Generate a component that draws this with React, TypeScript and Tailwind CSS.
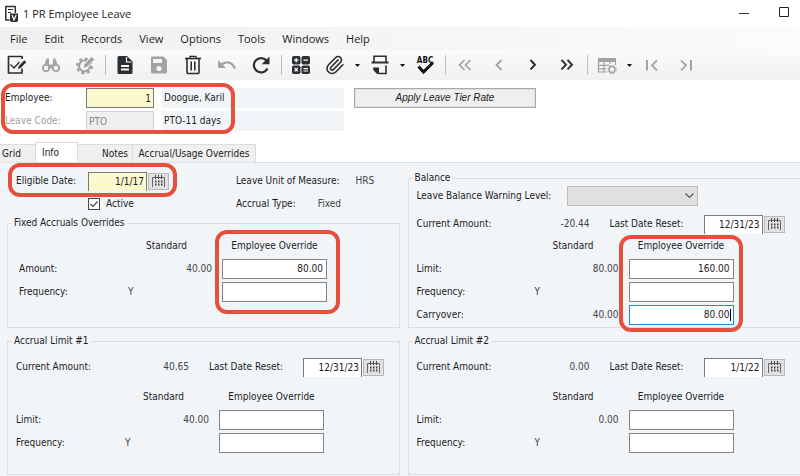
import type { ReactNode } from 'react';

const DARK = '#2b2f33';
const MUTED = '#a3a3a3';

function Ico({ children, w = 20 }: { children: ReactNode; w?: number }) {
  return (
    <svg width={w} height="20" viewBox={`0 0 ${w} 20`} fill="none" aria-hidden="true" className="shrink-0">
      {children}
    </svg>
  );
}

function Tool({ label, children, disabled }: { label: string; children: ReactNode; disabled?: boolean }) {
  return (
    <button type="button" aria-label={label} disabled={disabled} className="flex h-[30px] w-[34px] shrink-0 items-center justify-center">
      <Ico>{children}</Ico>
    </button>
  );
}

function Caret({ label }: { label: string }) {
  return (
    <button type="button" aria-label={label} className="flex h-[30px] w-[11px] shrink-0 items-center justify-center">
      <svg width="5" height="3" viewBox="0 0 5 3" aria-hidden="true">
        <path d="M0 0h5L2.500 3z" fill="#111" />
      </svg>
    </button>
  );
}

function Separator() {
  return (
    <div className="flex w-[6px] shrink-0 justify-center">
      <div className="h-5 w-px bg-[#bdbdbd]" />
    </div>
  );
}

function Toolbar() {
  return (
    <div role="toolbar" className="flex h-[30px] items-center overflow-hidden bg-linear-to-b from-[#fbfbfb] to-[#f0f0f0]">
      <Tool label="Edit">
        <path d="M15 13.500v4.500H1.500V1.500H15v2.500" stroke={DARK} strokeWidth="1.700" strokeLinejoin="round" />
        <path d="M3.500 9.500l3.500 3.500L12.500 7" stroke={DARK} strokeWidth="1.400" />
        <path d="M11 14l.8-3L17.300 5.300l2 2-5.600 5.800z" fill={DARK} />
      </Tool>
      <Tool label="Find" disabled>
        <path d="M5 5h3v4.500h4V5h3l1.800 6H3.200z" fill={MUTED} />
        <circle cx="5" cy="13" r="3.200" stroke={MUTED} strokeWidth="1.800" fill="#f4f4f4" />
        <circle cx="15" cy="13" r="3.200" stroke={MUTED} strokeWidth="1.800" fill="#f4f4f4" />
        <path d="M8.500 10.500h3v3h-3zM5.500 3.500h2.500V5H5.500zM12 3.500h2.500V5H12z" fill={MUTED} />
      </Tool>
      <Tool label="Options" disabled>
        <circle cx="9.500" cy="11" r="7.200" stroke={MUTED} strokeWidth="2.600" strokeDasharray="3.100 2.555" />
        <circle cx="9.500" cy="11" r="5.400" stroke={MUTED} strokeWidth="2" />
        <path d="M8 13.500l.8-4L16.500 1.500 19.800 4.500 12 12.300z" fill={MUTED} stroke="#f6f6f6" strokeWidth="1" />
      </Tool>
      <Separator />
      <Tool label="New">
        <path d="M4.500 1H12l5.500 5.500v11a1.500 1.500 0 0 1-1.500 1.500H4a1.500 1.500 0 0 1-1.500-1.500v-15A1.500 1.500 0 0 1 4 1z" fill={DARK} />
        <path d="M11.500 2v5h5" stroke="#f6f6f6" strokeWidth="1.200" />
        <path d="M6 11h8M6 14.500h8" stroke="#f6f6f6" strokeWidth="1.800" />
      </Tool>
      <Tool label="Save" disabled>
        <path d="M3 1.500h11.500L18 5v12a1.500 1.500 0 0 1-1.500 1.500h-13A1.500 1.500 0 0 1 2 17V3a1.500 1.500 0 0 1 1-1.500z" fill={MUTED} />
        <path d="M4 4h9v4H4z" fill="#f6f6f6" />
        <circle cx="10" cy="13.500" r="2.600" fill="#f6f6f6" />
      </Tool>
      <Tool label="Delete">
        <path d="M2 3.500h16" stroke={DARK} strokeWidth="1.700" />
        <path d="M7 3V1.300h6V3" stroke={DARK} strokeWidth="1.300" />
        <path d="M4 4v13.500a1 1 0 0 0 1 1h10a1 1 0 0 0 1-1V4" stroke={DARK} strokeWidth="1.600" />
        <path d="M8.200 6.500v9M11.800 6.500v9" stroke={DARK} strokeWidth="1.600" />
      </Tool>
      <Tool label="Undo" disabled>
        <path d="M1 5v8h8L6 10c3.500-2.800 8.500-1.800 11 4l2-.8C16.300 6 9.500 4.400 4.200 8.200z" fill={MUTED} />
      </Tool>
      <Tool label="Refresh">
        <path d="M16.500 13.500A7.200 7.200 0 1 1 15.500 5.500" stroke={DARK} strokeWidth="2.200" />
        <path d="M18.500 1.500v7.800h-7.800z" fill={DARK} />
      </Tool>
      <Separator />
      <Tool label="Calculator">
        <rect x="1" y="1" width="8.500" height="8.500" rx="1.800" fill={DARK} />
        <rect x="10.500" y="1" width="8.500" height="8.500" rx="1.800" fill={DARK} />
        <rect x="1" y="10.500" width="8.500" height="8.500" rx="1.800" fill={DARK} />
        <rect x="10.500" y="10.500" width="8.500" height="8.500" rx="1.800" fill={DARK} />
        <path d="M3 5.200h4.500M5.200 3v4.500M12.500 5.200H17M3.600 13l3.200 3.400M6.800 13l-3.200 3.400M12.500 13.600H17M12.500 16H17" stroke="#fff" strokeWidth="1.200" />
      </Tool>
      <Tool label="Attachments">
        <path
          transform="translate(-.5 -.2) scale(.85)"
          d="m16 6-8.414 8.586a2 2 0 0 0 2.829 2.829l8.414-8.586a4 4 0 1 0-5.657-5.657l-8.379 8.551a6 6 0 1 0 8.485 8.485l8.379-8.551"
          stroke={DARK}
          strokeWidth="1.900"
          strokeLinecap="round"
        />
      </Tool>
      <Caret label="Attachment choices" />
      <Tool label="Print">
        <path d="M4 7V1.300h12V7" stroke={DARK} strokeWidth="1.600" />
        <path d="M1.500 7.500h17" stroke={DARK} strokeWidth="2" />
        <path d="M16 10.500v8H9" stroke={DARK} strokeWidth="1.600" />
        <path d="M3.200 12.500H9v6.500H7L3.200 15z" fill={DARK} />
      </Tool>
      <Caret label="Print choices" />
      <Tool label="Check spelling">
        <text x="10" y="8" textAnchor="middle" fontSize="8" fontWeight="700" fontFamily="DejaVu Sans Condensed, sans-serif" fill="#111">ABC</text>
        <path d="M3.500 11.500l5 5.500L18 7.500" stroke="#111" strokeWidth="3" />
      </Tool>
      <Separator />
      <Tool label="First record" disabled>
        <path d="M9.500 5l-5 5 5 5M15.500 5l-5 5 5 5" stroke={MUTED} strokeWidth="1.700" />
      </Tool>
      <Tool label="Previous record" disabled>
        <path d="M12.500 5l-5 5 5 5" stroke={MUTED} strokeWidth="1.900" />
      </Tool>
      <Tool label="Next record">
        <path d="M7.500 5l4.500 4.700-4.500 4.700" stroke={DARK} strokeWidth="2" />
      </Tool>
      <Tool label="Last record">
        <path d="M4.500 5l4.500 4.700-4.500 4.700M10.500 5l4.500 4.700-4.500 4.700" stroke={DARK} strokeWidth="1.900" />
      </Tool>
      <Separator />
      <Tool label="Grid settings" disabled>
        <path d="M1 3h18v4H1z" fill={MUTED} />
        <path d="M1.500 6v11H10M1.500 10.300H12M1.500 13.800H9M7 6v11M13 6v3M18.500 6v4" stroke={MUTED} strokeWidth="1.200" />
        <circle cx="15" cy="14.500" r="3" stroke={MUTED} strokeWidth="1.500" />
        <circle cx="15" cy="14.500" r="4.300" stroke={MUTED} strokeWidth="1" strokeDasharray="1.700 1.677" />
      </Tool>
      <Caret label="Grid choices" />
      <Tool label="Go to start" disabled>
        <path d="M5 5v10.500" stroke={MUTED} strokeWidth="2" />
        <path d="M15 5.300l-5 5 5 5" stroke={MUTED} strokeWidth="1.800" />
      </Tool>
      <Tool label="Go to end" disabled>
        <path d="M15 5v10.500" stroke={MUTED} strokeWidth="2" />
        <path d="M5 5.300l5 5-5 5" stroke={MUTED} strokeWidth="1.800" />
      </Tool>
    </div>
  );
}

function DateField({ id, value, yellow }: { id: string; value: string; yellow?: boolean }) {
  return (
    <div className="flex items-center gap-px">
      <input
        id={id}
        defaultValue={value}
        className={`h-[19px] w-[59px] border border-b-0 border-[#7a7a7a] px-[2px] text-right ${yellow ? 'bg-[#fcf8cd]' : 'bg-white'}`}
      />
      <button type="button" aria-label="Open calendar" className="flex h-[17px] w-[21px] items-center justify-center border border-[#b9b9b9] bg-[#e2e2e2]">
        <svg width="13" height="12" viewBox="0 0 13 12" fill="none" aria-hidden="true">
          <path d="M.5 12V2.500h12V12" stroke="#666" />
          <path d="M3.500 0v4M6.500 0v4M9.500 0v4" stroke="#444" />
          <path d="M3 6.500h1.500M6 6.500h1.500M9 6.500h1.500M3 9.500h1.500M6 9.500h1.500M9 9.500h1.500" stroke="#444" strokeWidth="2" />
        </svg>
      </button>
    </div>
  );
}

function Group({ title, children, className = '' }: { title: string; children: ReactNode; className?: string }) {
  return (
    <fieldset className={`min-w-0 border border-[#dcdfe1] ${className}`}>
      <legend className="ml-1 h-4 px-[2px] leading-4">{title}</legend>
      {children}
    </fieldset>
  );
}

function CurrentAmount({ id, amount, date }: { id: string; amount: string; date: string }) {
  return (
    <div className="flex h-5 items-center pl-2">
      <span>Current Amount:</span>
      <span className="w-[98px] text-right text-[#444]">{amount}</span>
      <label htmlFor={id} className="w-[114px] pl-[20px]">Last Date Reset:</label>
      <DateField id={id} value={date} />
    </div>
  );
}

type Row = { label: string; period?: string; standard?: string; value?: string; active?: boolean };

function Overrides({ id, rows, labelClass, padClass, marked }: { id: string; rows: Row[]; labelClass: string; padClass: string; marked?: string }) {
  return (
    <div className={`flex ${padClass}`}>
      <div>
        <div className="flex h-[22px] items-center">
          <span className={labelClass} />
          <span className="w-[84px] pl-[18px]">Standard</span>
        </div>
        {rows.map((r) => (
          <div key={r.label} className="flex h-[23px] items-center">
            <label htmlFor={`${id}-${r.label}`} className={labelClass}>{r.label}:</label>
            <span className="flex w-[84px] justify-between text-[#444]">
              <span>{r.period}</span>
              <span>{r.standard}</span>
            </span>
          </div>
        ))}
      </div>
      <div className="relative ml-[10px] w-[105px]">
        <div className="flex h-[22px] items-center justify-center whitespace-nowrap">Employee Override</div>
        {rows.map((r) => (
          <div key={r.label} className="relative flex h-[23px] items-center">
            <input
              id={`${id}-${r.label}`}
              defaultValue={r.value}
              className={`h-5 w-full border bg-white px-[3px] text-right ${r.active ? 'border-[#2f86d6]' : 'border-[#858585]'}`}
            />
            {r.active && <span className="absolute right-[3px] h-3 w-px bg-black" />}
          </div>
        ))}
        {marked && <div className={`pointer-events-none absolute rounded-xl border-4 border-[#e4503c] ${marked}`} />}
      </div>
    </div>
  );
}

const menus = ['File', 'Edit', 'Records', 'View', 'Options', 'Tools', 'Windows', 'Help'];

export default function App() {
  return (
    <div className="flex min-h-screen flex-col overflow-hidden bg-white font-['DejaVu_Sans_Condensed','DejaVu_Sans',sans-serif] text-[10px] leading-4 text-[#1c1c1c]">
      <header className="flex h-[27px] items-center gap-1 pl-1 font-['Open_Sans',sans-serif] text-[11px]">
        <svg width="15" height="18" viewBox="0 0 15 18" fill="none" aria-hidden="true">
          <path d="M5.500 15H1.800V1.500h9.500V8" stroke={DARK} strokeWidth="1.500" strokeLinejoin="round" />
          <path d="M4 4.500h5M4 7.500h3" stroke={DARK} strokeWidth="1.200" />
          <path d="M6 8.500h8v7.500l-1.500 1H7.500L6 16z" fill={DARK} />
          <path d="M8 10l2 5 2.200-5" stroke="#fff" strokeWidth="1.200" />
        </svg>
        <h1 className="flex-1">1 PR Employee Leave</h1>
        <button type="button" aria-label="Minimize" className="flex h-full w-10 items-center justify-center">
          <svg width="10" height="10" viewBox="0 0 10 10" aria-hidden="true"><path d="M0 4.500h10" stroke="#333" /></svg>
        </button>
        <button type="button" aria-label="Maximize" className="flex h-full w-8 items-center justify-center pb-1">
          <svg width="10" height="10" viewBox="0 0 10 10" fill="none" aria-hidden="true"><path d="M.5.5h9v9h-9z" stroke="#222" /></svg>
        </button>
      </header>

      <nav className="flex h-[23px] items-center gap-[17px] bg-linear-to-r from-[#f0f0f0] to-[#fbfbfb] pl-[10px] font-['Open_Sans',sans-serif] text-[11px]">
        {menus.map((m) => <button key={m} type="button">{m}</button>)}
      </nav>

      <Toolbar />

      <section className="relative flex items-start gap-[10px] pt-2 pl-[5px]">
        <div className="grid grid-cols-[73px_68px_182px] items-center gap-x-2 gap-y-[3px]">
          <label htmlFor="employee">Employee:</label>
          <input id="employee" defaultValue="1" className="h-5 border border-[#7a7a7a] bg-[#fcf8cd] px-[2px] text-right" />
          <output className="flex h-5 items-center bg-[#f1f5f8] px-[2px]">Doogue, Karil</output>
          <label htmlFor="leave-code" className="text-[#a0a0a0]">Leave Code:</label>
          <input id="leave-code" disabled defaultValue="PTO" className="h-5 border border-[#cfcfcf] bg-[#f0f0f0] px-[2px] text-[#858585]" />
          <output className="flex h-5 items-center bg-[#f1f5f8] px-[2px]">PTO-11 days</output>
        </div>
        <button type="button" className="h-5 w-[182px] border border-[#a9a9a9] bg-[#efefef] font-['Liberation_Sans',sans-serif] text-[10px] italic shadow-[inset_0_0_0_1px_#dedede]">
          Apply Leave Tier Rate
        </button>
        <div className="pointer-events-none absolute top-[3px] left-px h-[51px] w-[234px] rounded-xl border-4 border-[#e4503c]" />
      </section>

      <div role="tablist" className="mt-[11px] flex h-5 items-end">
        <button type="button" role="tab" className="h-[18px] w-[35px] border-t border-[#dcdcdc] bg-[#f0f0f0] pl-[2px] text-left">Grid</button>
        <button type="button" role="tab" aria-selected="true" className="h-5 w-[43px] border border-b-0 border-[#dcdcdc] bg-white pl-[6px] text-left">Info</button>
        <button type="button" role="tab" className="h-[18px] w-[55px] border-t border-r border-[#dcdcdc] bg-[#f0f0f0] pr-1 text-right">Notes</button>
        <button type="button" role="tab" className="h-[18px] w-[123px] border-t border-r border-[#dcdcdc] bg-[#f0f0f0] whitespace-nowrap">Accrual/Usage Overrides</button>
      </div>

      <main className="flex-1 border-t border-[#dfe2e4] bg-[#f1f5f8] pt-[7px]">
        <div className="grid grid-cols-2 gap-x-2 gap-y-[5px] pl-[7px]">
          <div className="flex flex-col">
            <div className="relative grid h-[45px] grid-cols-[72px_148px_auto] grid-rows-2 items-center pl-[9px]">
              <label htmlFor="eligible-date" className="whitespace-nowrap">Eligible Date:</label>
              <DateField id="eligible-date" value="1/1/17" yellow />
              <p className="flex gap-4"><span>Leave Unit of Measure:</span><span className="text-[#444]">HRS</span></p>
              <label className="col-start-2 flex items-center gap-[6px]">
                <span className="relative flex">
                  <input type="checkbox" defaultChecked className="size-3 appearance-none border border-[#444] bg-white" />
                  <svg className="pointer-events-none absolute inset-0" width="12" height="12" viewBox="0 0 12 12" fill="none" aria-hidden="true">
                    <path d="M2.500 6l2.500 2.500L9.500 3.500" stroke="#444" strokeWidth="1.200" />
                  </svg>
                </span>
                Active
              </label>
              <p className="flex gap-[22px]"><span>Accrual Type:</span><span className="text-[#444]">Fixed</span></p>
              <div className="pointer-events-none absolute top-[-7px] left-px h-[34px] w-[169px] rounded-xl border-4 border-[#e4503c]" />
            </div>
            <Group title="Fixed Accruals Overrides" className="flex-1">
              <Overrides
                id="fixed"
                labelClass="w-[109px]"
                padClass="pt-1 pl-[11px]"
                marked="top-[-5px] left-[-7px] h-[84px] w-[125px]"
                rows={[{ label: 'Amount', standard: '40.00', value: '80.00' }, { label: 'Frequency', period: 'Y' }]}
              />
            </Group>
          </div>

          <Group title="Balance" className="border-r-0">
            <div className="flex h-5 items-center pl-2">
              <label htmlFor="warning-level" className="w-[150px] whitespace-nowrap">Leave Balance Warning Level:</label>
              <div className="relative">
                <select id="warning-level" className="block h-5 w-[131px] appearance-none border border-[#bcbcbc] bg-[#e0e0e0]" />
                <svg className="pointer-events-none absolute top-[7px] right-1" width="9" height="6" viewBox="0 0 9 6" fill="none" aria-hidden="true">
                  <path d="M.5.5l4 4 4-4" stroke="#555" strokeWidth="1.200" />
                </svg>
              </div>
            </div>
            <div className="h-2" />
            <CurrentAmount id="balance-reset" amount="-20.44" date="12/31/23" />
            <Overrides
              id="balance"
              labelClass="w-[118px]"
              padClass="pt-px pb-px pl-2"
              marked="top-0 left-[-10px] h-[97px] w-[124px]"
              rows={[
                { label: 'Limit', standard: '80.00', value: '160.00' },
                { label: 'Frequency', period: 'Y' },
                { label: 'Carryover', standard: '40.00', value: '80.00', active: true },
              ]}
            />
          </Group>

          <Group title="Accrual Limit #1" className="pb-5">
            <div className="h-2" />
            <CurrentAmount id="limit1-reset" amount="40.65" date="12/31/23" />
            <Overrides
              id="limit1"
              labelClass="w-[109px]"
              padClass="pt-[9px] pl-2"
              rows={[{ label: 'Limit', standard: '40.00' }, { label: 'Frequency', period: 'Y' }]}
            />
          </Group>

          <Group title="Accrual Limit #2" className="border-r-0 pb-5">
            <div className="h-2" />
            <CurrentAmount id="limit2-reset" amount="0.00" date="1/1/22" />
            <Overrides
              id="limit2"
              labelClass="w-[118px]"
              padClass="pt-[9px] pl-2"
              rows={[{ label: 'Limit', standard: '0.00' }, { label: 'Frequency', period: 'Y' }]}
            />
          </Group>
        </div>
      </main>
    </div>
  );
}
